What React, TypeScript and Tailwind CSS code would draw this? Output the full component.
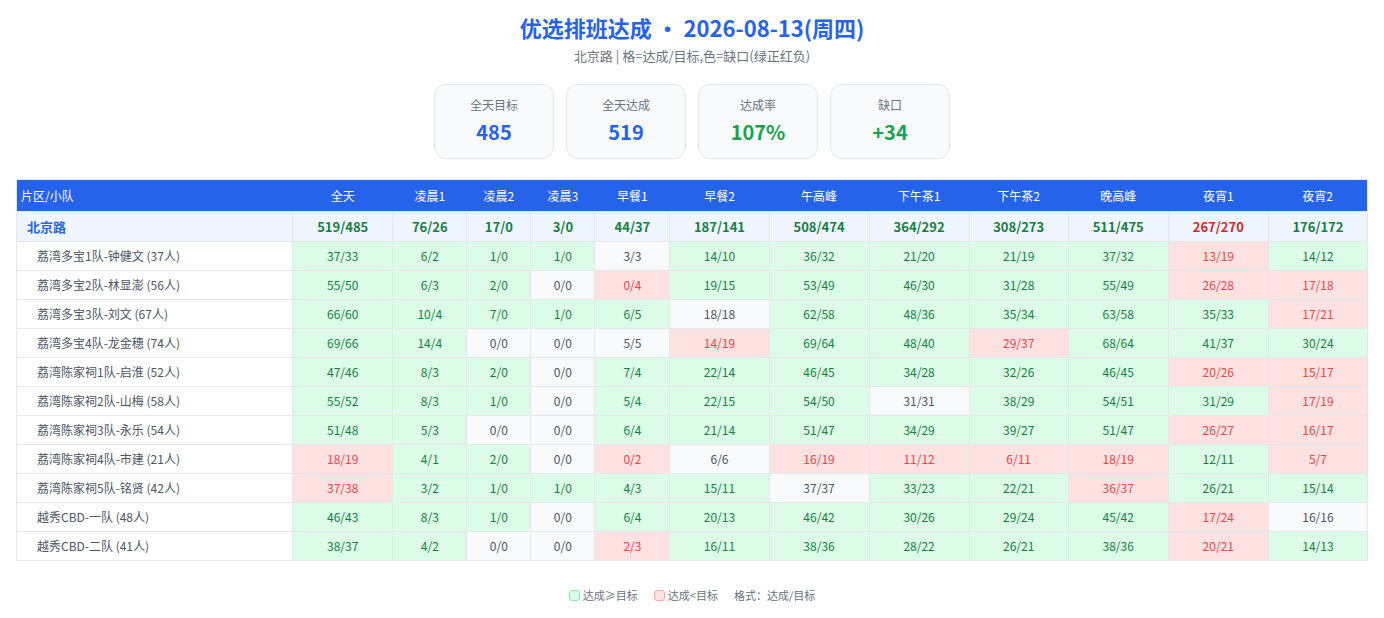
const slots = ['全天', '凌晨1', '凌晨2', '凌晨3', '早餐1', '早餐2', '午高峰', '下午茶1', '下午茶2', '晚高峰', '夜宵1', '夜宵2'];

const colWidths = ['w-[276px]', 'w-[100px]', 'w-[74px]', 'w-[64px]', 'w-[64px]', 'w-[75px]', 'w-[99px]', 'w-[100px]', 'w-[100px]', 'w-[99px]', 'w-[100px]', 'w-[100px]', 'w-[99px]'];

const total = ['519/485', '76/26', '17/0', '3/0', '44/37', '187/141', '508/474', '364/292', '308/273', '511/475', '267/270', '176/172'];

const teams: { name: string; cells: string[] }[] = [
  { name: '荔湾多宝1队-钟健文 (37人)', cells: ['37/33', '6/2', '1/0', '1/0', '3/3', '14/10', '36/32', '21/20', '21/19', '37/32', '13/19', '14/12'] },
  { name: '荔湾多宝2队-林显澎 (56人)', cells: ['55/50', '6/3', '2/0', '0/0', '0/4', '19/15', '53/49', '46/30', '31/28', '55/49', '26/28', '17/18'] },
  { name: '荔湾多宝3队-刘文 (67人)', cells: ['66/60', '10/4', '7/0', '1/0', '6/5', '18/18', '62/58', '48/36', '35/34', '63/58', '35/33', '17/21'] },
  { name: '荔湾多宝4队-龙金穗 (74人)', cells: ['69/66', '14/4', '0/0', '0/0', '5/5', '14/19', '69/64', '48/40', '29/37', '68/64', '41/37', '30/24'] },
  { name: '荔湾陈家祠1队-启淮 (52人)', cells: ['47/46', '8/3', '2/0', '0/0', '7/4', '22/14', '46/45', '34/28', '32/26', '46/45', '20/26', '15/17'] },
  { name: '荔湾陈家祠2队-山梅 (58人)', cells: ['55/52', '8/3', '1/0', '0/0', '5/4', '22/15', '54/50', '31/31', '38/29', '54/51', '31/29', '17/19'] },
  { name: '荔湾陈家祠3队-永乐 (54人)', cells: ['51/48', '5/3', '0/0', '0/0', '6/4', '21/14', '51/47', '34/29', '39/27', '51/47', '26/27', '16/17'] },
  { name: '荔湾陈家祠4队-市建 (21人)', cells: ['18/19', '4/1', '2/0', '0/0', '0/2', '6/6', '16/19', '11/12', '6/11', '18/19', '12/11', '5/7'] },
  { name: '荔湾陈家祠5队-铭贤 (42人)', cells: ['37/38', '3/2', '1/0', '1/0', '4/3', '15/11', '37/37', '33/23', '22/21', '36/37', '26/21', '15/14'] },
  { name: '越秀CBD-一队 (48人)', cells: ['46/43', '8/3', '1/0', '0/0', '6/4', '20/13', '46/42', '30/26', '29/24', '45/42', '17/24', '16/16'] },
  { name: '越秀CBD-二队 (41人)', cells: ['38/37', '4/2', '0/0', '0/0', '2/3', '16/11', '38/36', '28/22', '26/21', '38/36', '20/21', '14/13'] },
];

const stats = [
  { label: '全天目标', value: '485', color: 'text-[#2563eb]' },
  { label: '全天达成', value: '519', color: 'text-[#2563eb]' },
  { label: '达成率', value: '107%', color: 'text-[#16a34a]' },
  { label: '缺口', value: '+34', color: 'text-[#16a34a]' },
];

function gap(cell: string) {
  const [got, target] = cell.split('/').map(Number);
  return got - target;
}

function cellClass(cell: string) {
  const d = gap(cell);
  if (d > 0) return 'bg-[#dcfce7] text-[#15803d]';
  if (d < 0) return 'bg-[#fee2e2] text-[#ef4444]';
  return 'bg-[#f9fafb] text-[#4b5563]';
}

export default function App() {
  return (
    <div
      className="min-h-screen bg-white px-4 pt-[12px] pb-6 text-[#374151]"
      style={{ fontFamily: '"Noto Sans CJK SC", "Noto Sans", sans-serif' }}
    >
      {/* Title */}
      <h1 className="text-center text-[22px] font-bold leading-[30px] text-[#2563eb]">
        优选排班达成 · 2026-08-13(周四)
      </h1>
      <p className="mt-1 text-center text-[13px] leading-5 text-[#6b7280]">
        北京路 | 格=达成/目标,色=缺口(绿正红负)
      </p>

      {/* Stats */}
      <div className="mt-[18px] flex justify-center gap-3">
        {stats.map((s) => (
          <div
            key={s.label}
            className="w-[120px] rounded-xl border border-[#e2e8f0] bg-[#f8fafc] pt-3 pb-3 text-center"
          >
            <div className="text-xs leading-4 text-[#6b7280]">{s.label}</div>
            <div className={`mt-[5px] text-[20px] font-bold leading-7 ${s.color}`}>{s.value}</div>
          </div>
        ))}
      </div>

      {/* Table */}
      <table className="mt-[20px] w-full table-fixed border-collapse border border-[#e5e7eb] text-xs">
        <colgroup>
          {colWidths.map((w, i) => (
            <col key={i} className={w} />
          ))}
        </colgroup>
        <thead>
          <tr className="h-[32px] bg-[#2563eb] text-white">
            <th className="pl-1 text-left font-normal">片区/小队</th>
            {slots.map((s) => (
              <th key={s} className="font-normal">
                {s}
              </th>
            ))}
          </tr>
        </thead>
        <tbody>
          <tr className="h-[30px] bg-[#eff6ff]">
            <td className="border border-[#e5e7eb] pl-[10px] text-[13px] font-bold text-[#2563eb]">北京路</td>
            {total.map((c, i) => (
              <td
                key={i}
                className={`border border-[#e5e7eb] text-center text-[13px] font-bold ${gap(c) < 0 ? 'text-[#dc2626]' : 'text-[#15803d]'}`}
              >
                {c}
              </td>
            ))}
          </tr>
          {teams.map((t) => (
            <tr key={t.name} className="h-[29px]">
              <td className="border border-[#e5e7eb] pl-5 text-[#4b5563]">{t.name}</td>
              {t.cells.map((c, i) => (
                <td key={i} className={`border border-[#e5e7eb] text-center ${cellClass(c)}`}>
                  {c}
                </td>
              ))}
            </tr>
          ))}
        </tbody>
      </table>

      {/* Legend */}
      <div className="mt-[26px] flex items-center justify-center gap-4 text-[11px] text-[#6b7280]">
        <span className="flex items-center gap-[3px]">
          <span className="inline-block h-[11px] w-[11px] rounded-[3px] border border-[#86efac] bg-[#dcfce7]" />
          达成≥目标
        </span>
        <span className="flex items-center gap-[3px]">
          <span className="inline-block h-[11px] w-[11px] rounded-[3px] border border-[#fca5a5] bg-[#fee2e2]" />
          达成&lt;目标
        </span>
        <span>格式：达成/目标</span>
      </div>
    </div>
  );
}
